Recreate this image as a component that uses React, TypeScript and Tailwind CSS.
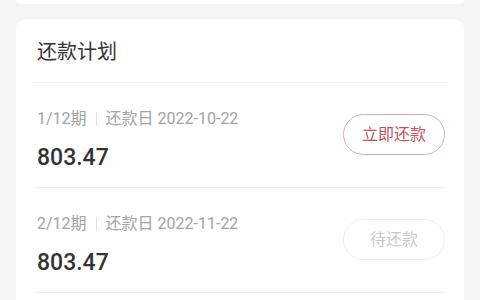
const plans = [
  { period: "1/12期", date: "2022-10-22", amount: "803.47", active: true },
  { period: "2/12期", date: "2022-11-22", amount: "803.47", active: false },
];

const font = { fontFamily: "Roboto, 'Noto Sans CJK SC', sans-serif" };

export default function App() {
  return (
    <div className="w-[480px] h-[300px] overflow-hidden bg-[#f5f5f9] px-4" style={font}>
      <div className="h-[4px] bg-white rounded-b-[10px]" />
      <div className="mt-[15px] pb-[40px] bg-white rounded-[10px]">
        <div className="px-[21px] pt-[19px] pb-[16px] text-[20px] leading-[28px] text-[#333]">
          还款计划
        </div>
        <div className="mx-[17px] border-b border-[#f3f3f5]" />
        {plans.map((p) => (
          <div key={p.period} className="mx-[21px] border-b border-[#f0f0f2]">
            <div className="flex items-start justify-between pt-[25px] pb-[14px]">
              <div>
                <div className="flex items-center text-[16px] leading-[22px] text-[#a3a3a3]">
                  <span>{p.period}</span>
                  <span className="mx-[9px] h-[14px] w-px bg-[#e2e2e2]" />
                  <span>还款日 {p.date}</span>
                </div>
                <div className="mt-[13px] text-[23px] leading-[30px] font-medium text-[#333]">
                  {p.amount}
                </div>
              </div>
              <button
                className={
                  p.active
                    ? "mt-[6px] mr-[-2px] w-[102px] h-[41px] rounded-full border border-[#ddaaae] text-[16px] text-[#c9505b]"
                    : "mt-[6px] mr-[-2px] w-[102px] h-[41px] rounded-full border border-[#efefef] text-[16px] text-[#c8c8c8]"
                }
              >
                {p.active ? "立即还款" : "待还款"}
              </button>
            </div>
          </div>
        ))}
      </div>
    </div>
  );
}
